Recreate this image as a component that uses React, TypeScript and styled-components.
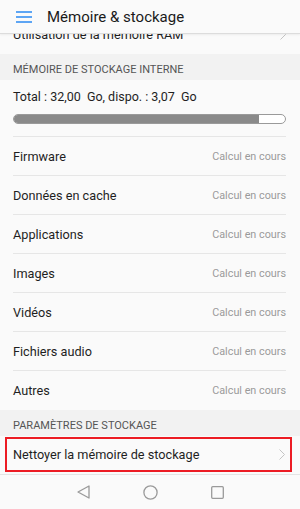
import React from "react";
import styled, { createGlobalStyle } from "styled-components";

const Global = createGlobalStyle`
  html, body { margin: 0; padding: 0; }
  body {
    background: #fafafa;
    font-family: Roboto, "Noto Sans", "Liberation Sans", sans-serif;
    -webkit-font-smoothing: antialiased;
  }
`;

const Screen = styled.div`
  width: 300px;
  height: 509px;
  display: flex;
  flex-direction: column;
  overflow: hidden;
  background: #fafafa;
`;

const Header = styled.header`
  position: relative;
  z-index: 2;
  height: 33px;
  flex: none;
  display: flex;
  align-items: center;
  gap: 15px;
  padding-left: 16px;
  background: #fafafa;
  border-bottom: 1px solid #dcdcdc;
  box-shadow: 0 1px 2px rgba(0, 0, 0, 0.06);
`;

const Title = styled.h1`
  margin: 0;
  font-size: 15px;
  font-weight: 400;
  color: #1a1a1a;
`;

const Content = styled.main`
  flex: 1;
  overflow: hidden;
  display: flex;
  flex-direction: column;
`;

const Scroller = styled.div`
  margin-top: -19px;
  display: flex;
  flex-direction: column;
`;

const SectionHeader = styled.div`
  height: 26px;
  box-sizing: border-box;
  padding: 9px 13px 0;
  background: #f2f2f2;
  font-size: 11px;
  line-height: 14px;
  color: #555;
  text-transform: uppercase;
`;

const Row = styled.div<{ $divider?: boolean; $highlight?: boolean }>`
  height: ${(p) => (p.$highlight ? "35px" : "39px")};
  box-sizing: border-box;
  display: flex;
  align-items: center;
  justify-content: space-between;
  margin: ${(p) => (p.$highlight ? "1px 8px 2px 5px" : "0 14px 0 13px")};
  padding: ${(p) => (p.$highlight ? "0 5px 0 6px" : "0")};
  border: ${(p) => (p.$highlight ? "2px solid #ec1c24" : "none")};
  border-bottom: ${(p) =>
    p.$highlight ? "2px solid #ec1c24" : p.$divider ? "1px solid #e6e6e6" : "1px solid transparent"};
`;

const Label = styled.span`
  font-size: 12.7px;
  color: #1f1f1f;
`;

const Value = styled.span`
  font-size: 10.8px;
  color: #9a9a9a;
`;

const StorageBlock = styled.div`
  margin: 0 14px 0 13px;
  padding: 7px 0 12px;
  border-bottom: 1px solid #e6e6e6;
`;

const Total = styled.div`
  font-size: 12.5px;
  line-height: 20px;
  color: #1f1f1f;
  white-space: pre;
`;

const Bar = styled.div`
  margin-top: 7px;
  height: 10px;
  box-sizing: border-box;
  border: 1px solid #9a9a9a;
  border-radius: 5px;
  background: #fff;
  overflow: hidden;
`;

const BarFill = styled.div`
  height: 100%;
  background: #8a8a8a;
`;

const NavBar = styled.nav`
  height: 35px;
  flex: none;
  box-sizing: border-box;
  border-top: 1px solid #e4e4e4;
  background: #fafafa;
  display: flex;
  align-items: center;
  justify-content: center;
  gap: 50px;
`;

const NavButton = styled.span`
  width: 17px;
  height: 17px;
  display: flex;
  align-items: center;
  justify-content: center;
`;

const Hamburger = () => (
  <svg width="16" height="12" viewBox="0 0 16 12">
    <g stroke="#4b9bf3" strokeWidth="1.8">
      <line x1="0" y1="1" x2="16" y2="1" />
      <line x1="0" y1="6" x2="16" y2="6" />
      <line x1="0" y1="11" x2="16" y2="11" />
    </g>
  </svg>
);

const Chevron = ({ color = "#c4c4c4" }: { color?: string }) => (
  <svg width="6" height="11" viewBox="0 0 6 11">
    <polyline points="0.5,0.5 5.5,5.5 0.5,10.5" fill="none" stroke={color} strokeWidth="1" />
  </svg>
);

const items = [
  "Firmware",
  "Données en cache",
  "Applications",
  "Images",
  "Vidéos",
  "Fichiers audio",
  "Autres",
];

export default function App() {
  const total = 32.0;
  const free = 3.07;
  const used = ((total - free) / total) * 100;
  return (
    <>
      <Global />
      <Screen>
        <Header>
          <Hamburger />
          <Title>Mémoire &amp; stockage</Title>
        </Header>
        <Content>
          <Scroller>
            <Row>
              <Label>Utilisation de la mémoire RAM</Label>
              <Chevron />
            </Row>
            <SectionHeader>Mémoire de stockage interne</SectionHeader>
            <StorageBlock>
              <Total>Total : 32,00  Go, dispo. : 3,07  Go</Total>
              <Bar>
                <BarFill style={{ width: `${used}%` }} />
              </Bar>
            </StorageBlock>
            {items.map((it, i) => (
              <Row key={it} $divider={i < items.length - 1}>
                <Label>{it}</Label>
                <Value>Calcul en cours</Value>
              </Row>
            ))}
            <SectionHeader>Paramètres de stockage</SectionHeader>
            <Row $highlight>
              <Label>Nettoyer la mémoire de stockage</Label>
              <Chevron />
            </Row>
          </Scroller>
        </Content>
        <NavBar>
          <NavButton>
            <svg width="13" height="14" viewBox="0 0 13 14">
              <polygon points="12,1 12,13 1,7" fill="none" stroke="#9a9a9a" strokeWidth="1.3" strokeLinejoin="round" />
            </svg>
          </NavButton>
          <NavButton>
            <svg width="15" height="15" viewBox="0 0 15 15">
              <circle cx="7.5" cy="7.5" r="6.6" fill="none" stroke="#9a9a9a" strokeWidth="1.3" />
            </svg>
          </NavButton>
          <NavButton>
            <svg width="13" height="13" viewBox="0 0 13 13">
              <rect x="0.7" y="0.7" width="11.6" height="11.6" rx="1" fill="none" stroke="#9a9a9a" strokeWidth="1.3" />
            </svg>
          </NavButton>
        </NavBar>
      </Screen>
    </>
  );
}
